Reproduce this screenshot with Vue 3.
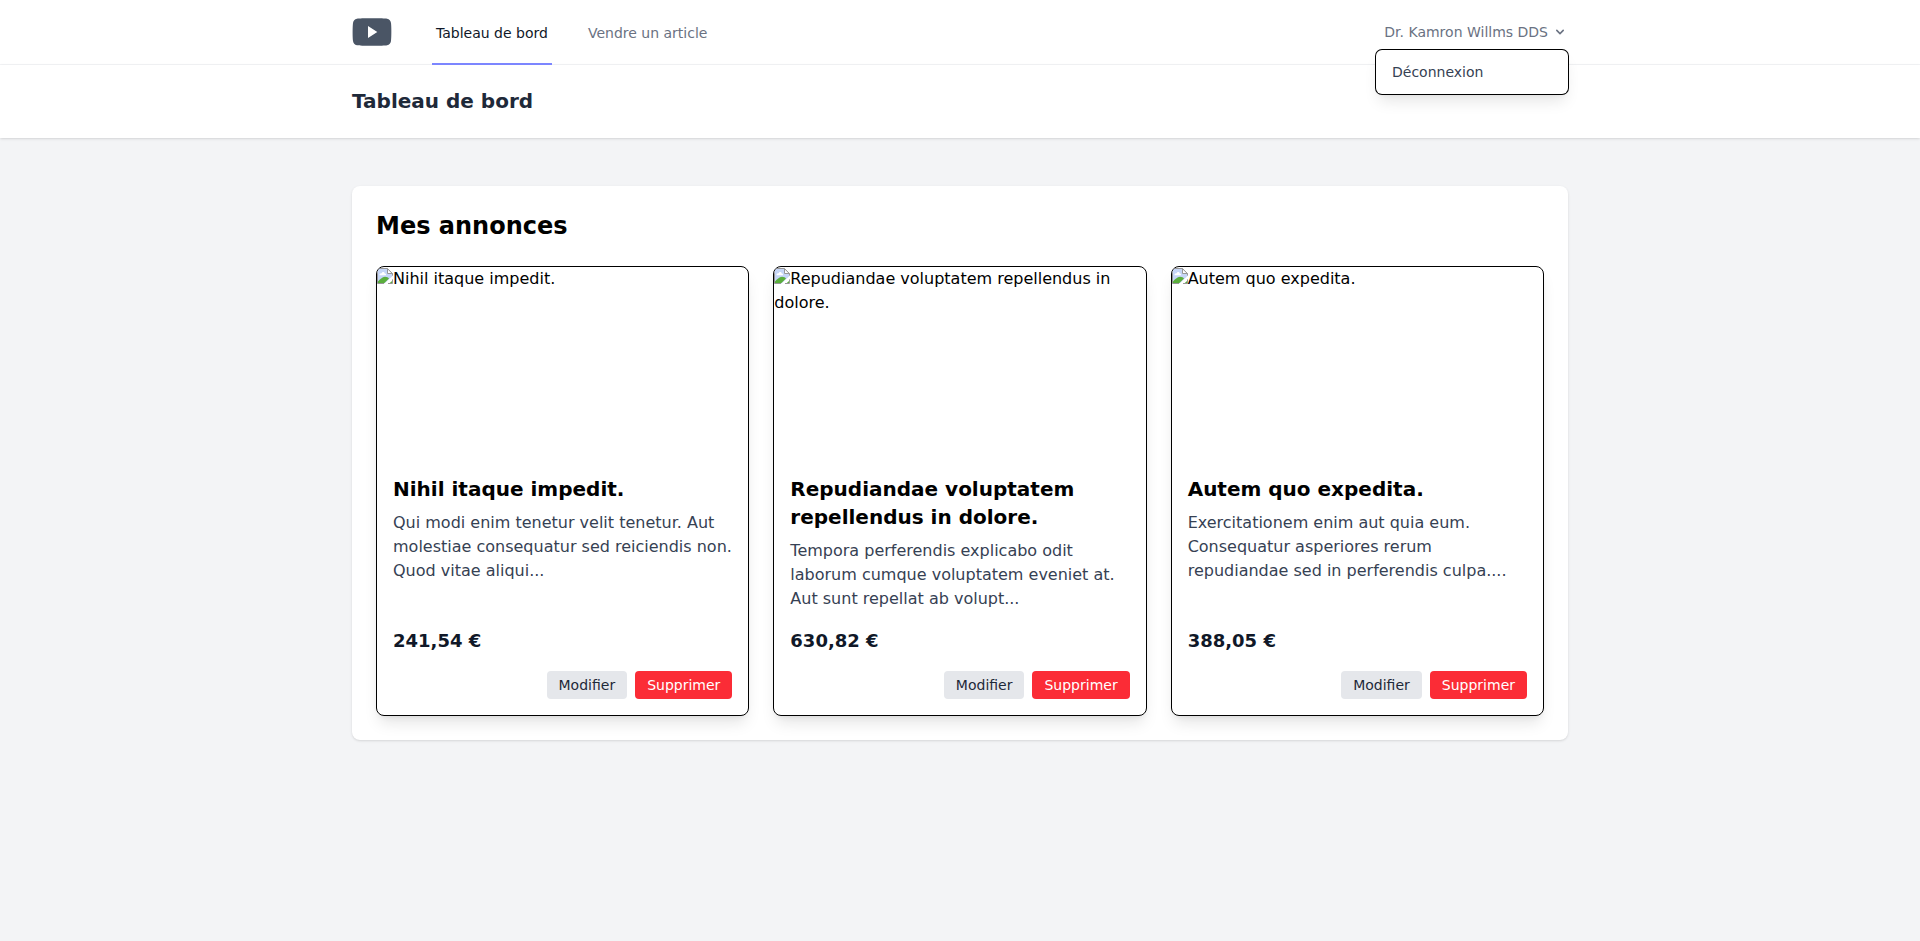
<script setup>
const listings = [
  {
    title: 'Nihil itaque impedit.',
    text: 'Qui modi enim tenetur velit tenetur. Aut molestiae consequatur sed reiciendis non. Quod vitae aliqui...',
    price: '241,54 €',
  },
  {
    title: 'Repudiandae voluptatem repellendus in dolore.',
    text: 'Tempora perferendis explicabo odit laborum cumque voluptatem eveniet at. Aut sunt repellat ab volupt...',
    price: '630,82 €',
  },
  {
    title: 'Autem quo expedita.',
    text: 'Exercitationem enim aut quia eum. Consequatur asperiores rerum repudiandae sed in perferendis culpa....',
    price: '388,05 €',
  },
]
</script>

<template>
  <div class="page">
    <nav class="nav">
      <div class="container nav-inner">
        <div class="nav-left">
          <a class="logo">
            <svg width="40" height="36" viewBox="0 0 40 36">
              <path
                fill="#4a5565"
                fill-rule="evenodd"
                d="M20 4.3C12 4.3 7 4.4 4.9 4.8C2.6 5.2 1.3 6.7 1 9C.5 12.5 .5 23.5 1 27C1.3 29.3 2.6 30.8 4.9 31.2C7 31.6 12 31.7 20 31.7C28 31.7 33 31.6 35.1 31.2C37.4 30.8 38.7 29.3 39 27C39.5 23.5 39.5 12.5 39 9C38.7 6.7 37.4 5.2 35.1 4.8C33 4.4 28 4.3 20 4.3ZM16 12L25.3 18L16 24Z"
              />
            </svg>
          </a>
          <div class="links">
            <a class="link active">Tableau de bord</a>
            <a class="link">Vendre un article</a>
          </div>
        </div>
        <div class="user">
          <button class="user-button">
            <span>Dr. Kamron Willms DDS</span>
            <svg width="16" height="16" viewBox="0 0 20 20" fill="currentColor">
              <path
                fill-rule="evenodd"
                clip-rule="evenodd"
                d="M5.293 7.293a1 1 0 011.414 0L10 10.586l3.293-3.293a1 1 0 111.414 1.414l-4 4a1 1 0 01-1.414 0l-4-4a1 1 0 010-1.414z"
              />
            </svg>
          </button>
          <div class="menu">
            <a class="menu-item">Déconnexion</a>
          </div>
        </div>
      </div>
    </nav>

    <header class="header">
      <div class="container">
        <h2 class="header-title">Tableau de bord</h2>
      </div>
    </header>

    <main class="container main">
      <section class="panel">
        <h1 class="panel-title">Mes annonces</h1>
        <div class="grid">
          <article v-for="item in listings" :key="item.title" class="card">
            <div class="picture">
              <svg class="missing" width="16" height="16" viewBox="0 0 16 16">
                <path fill="#c6d6f7" d="M.5 .5H10.5L15.5 5.5V8L7.5 15.5H.5Z" />
                <path fill="#fff" d="M2.6 7.2C2.2 5.6 3.8 4.8 4.7 5.3C5.1 3.6 7.5 3.7 7.7 5.4C9.1 5.2 9.4 6.8 8.6 7.2Z" />
                <path fill="#5aae3c" d="M1 15V13.4C3 11.6 5.2 8.8 8 8.8C9.9 8.8 11.2 9.6 12 10.6L7.4 15Z" />
                <path fill="#5aae3c" d="M12.8 15L15 13V15Z" />
                <path fill="none" stroke="#979797" d="M.5 15.5V.5H10.5L15.5 5.5V7.6M.5 15.5H7M15.5 11.4V15.5H11" />
                <path fill="#fff" stroke="#979797" d="M10.5 .7V5.5H15.3Z" />
              </svg>{{ item.title }}
            </div>
            <div class="body">
              <div>
                <h3 class="card-title">{{ item.title }}</h3>
                <p class="card-text">{{ item.text }}</p>
              </div>
              <div class="card-foot">
                <p class="price">{{ item.price }}</p>
                <div class="actions">
                  <a class="btn edit">Modifier</a>
                  <button class="btn delete">Supprimer</button>
                </div>
              </div>
            </div>
          </article>
        </div>
      </section>
    </main>
  </div>
</template>

<style>
body {
  background: #f3f4f6;
}
</style>

<style scoped>
*,
*::before,
*::after {
  box-sizing: border-box;
}
h1,
h2,
h3,
p {
  margin: 0;
}
button {
  border: 0;
  background: none;
  font: inherit;
  color: inherit;
  padding: 0;
}
svg {
  display: block;
}
.page {
  min-height: 100vh;
  background: #f3f4f6;
  font-family: "DejaVu Sans", sans-serif;
  font-size: 16px;
  line-height: 24px;
  color: #000;
}
.container {
  max-width: 1280px;
  margin: 0 auto;
  padding: 0 32px;
}
.nav {
  background: #fff;
  border-bottom: 1px solid #f3f4f6;
}
.nav-inner {
  display: flex;
  justify-content: space-between;
  height: 64px;
}
.nav-left {
  display: flex;
}
.logo {
  display: flex;
  align-items: center;
}
.links {
  display: flex;
  gap: 32px;
  margin: -1px 0 -1px 40px;
}
.link {
  display: inline-flex;
  align-items: center;
  padding: 4px 4px 0;
  border-bottom: 2px solid transparent;
  font-size: 14px;
  font-weight: 500;
  line-height: 20px;
  color: #6a7282;
}
.link.active {
  color: #101828;
  border-color: #7c86ff;
}
.user {
  position: relative;
  display: flex;
  align-items: center;
}
.user-button {
  display: flex;
  align-items: center;
  gap: 4px;
  font-size: 14px;
  font-weight: 500;
  line-height: 20px;
  color: #6a7282;
}
.menu {
  position: absolute;
  z-index: 10;
  top: 50px;
  right: 0;
  width: 192px;
  padding: 4px 0;
  border-radius: 6px;
  background: #fff;
  box-shadow:
    0 0 0 1px #000,
    0 10px 15px -3px rgb(0 0 0 / 0.1),
    0 4px 6px -4px rgb(0 0 0 / 0.1);
}
.menu-item {
  display: block;
  padding: 8px 16px;
  font-size: 14px;
  line-height: 20px;
  color: #364153;
}
.header {
  padding: 24px 0;
  background: #fff;
  box-shadow:
    0 1px 3px rgb(0 0 0 / 0.1),
    0 1px 2px -1px rgb(0 0 0 / 0.1);
}
.header-title {
  font-size: 20px;
  font-weight: 600;
  line-height: 25px;
  color: #1e2939;
}
.main {
  padding-top: 48px;
  padding-bottom: 48px;
}
.panel {
  padding: 24px;
  border-radius: 8px;
  background: #fff;
  box-shadow:
    0 1px 3px rgb(0 0 0 / 0.1),
    0 1px 2px -1px rgb(0 0 0 / 0.1);
}
.panel-title {
  margin-bottom: 24px;
  font-size: 24px;
  font-weight: 700;
  line-height: 32px;
}
.grid {
  display: grid;
  grid-template-columns: repeat(3, minmax(0, 1fr));
  gap: 24px;
}
.card {
  display: flex;
  flex-direction: column;
  overflow: hidden;
  border: 1px solid #000;
  border-radius: 8px;
  background: #fff;
  box-shadow:
    0 10px 15px -3px rgb(0 0 0 / 0.1),
    0 4px 6px -4px rgb(0 0 0 / 0.1);
}
.picture {
  height: 192px;
  overflow: hidden;
}
.missing {
  display: inline-block;
  vertical-align: baseline;
}
.body {
  flex: 1;
  display: flex;
  flex-direction: column;
  justify-content: space-between;
  padding: 16px;
}
.card-title {
  margin-bottom: 8px;
  font-size: 20px;
  font-weight: 600;
  line-height: 28px;
}
.card-text {
  color: #364153;
}
.card-foot {
  margin-top: 16px;
}
.price {
  font-size: 18px;
  font-weight: 700;
  line-height: 28px;
  color: #101828;
}
.actions {
  display: flex;
  justify-content: flex-end;
  gap: 8px;
  margin-top: 16px;
}
.btn {
  padding: 4px 12px;
  border-radius: 4px;
  font-size: 14px;
  line-height: 20px;
}
.edit {
  background: #e5e7eb;
  color: #1e2939;
}
.delete {
  background: #fb2c36;
  color: #fff;
}
</style>
